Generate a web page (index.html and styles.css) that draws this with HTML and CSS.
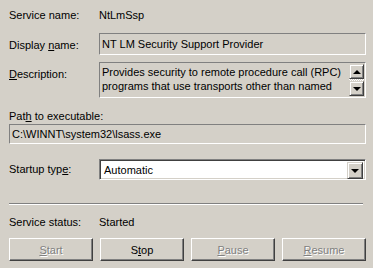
FILE: index.html
```html
<!DOCTYPE html>
<html lang="en">
<head>
  <meta charset="UTF-8" />
  <title>NtLmSsp Properties</title>
  <link rel="stylesheet" href="styles.css">
</head>
<body>
  <div class="page">
    <div class="row row-name">
      <div class="label">Service name:</div>
      <div class="value">NtLmSsp</div>
    </div>

    <div class="row row-display">
      <div class="label lbl-display">Display <u>n</u>ame:</div>
      <div class="field field-display">NT LM Security Support Provider</div>
    </div>

    <div class="row row-desc">
      <div class="label lbl-desc"><u>D</u>escription:</div>
      <div class="field field-desc">
        <div class="desc-text">Provides security to remote procedure call (RPC) programs that use transports other than named</div>
        <div class="scroll">
          <div class="sbtn"><span class="arrow-up"></span></div>
          <div class="track"></div>
          <div class="sbtn"><span class="arrow-down"></span></div>
        </div>
      </div>
    </div>

    <div class="path-label">Pat<u>h</u> to executable:</div>
    <div class="field field-path">C:\WINNT\system32\lsass.exe</div>

    <div class="row row-startup">
      <div class="label lbl-startup">Startup typ<u>e</u>:</div>
      <div class="combo">
        <div class="combo-text">Automatic</div>
        <div class="combo-btn"><span class="arrow-down"></span></div>
      </div>
    </div>

    <div class="sep"></div>

    <div class="row row-status">
      <div class="label">Service status:</div>
      <div class="value">Started</div>
    </div>

    <div class="buttons">
      <button class="btn" disabled><u>S</u>tart</button>
      <button class="btn">S<u>t</u>op</button>
      <button class="btn" disabled><u>P</u>ause</button>
      <button class="btn" disabled><u>R</u>esume</button>
    </div>
  </div>
</body>
</html>
```

FILE: styles.css
```css
body {
  margin: 0;
  background-color: #d4d0c8;
  font-family: 'Liberation Sans', Arial, sans-serif;
  font-size: 11px;
  line-height: 13px;
  color: #000;
}
u { text-decoration: underline; text-underline-offset: 1px; }
.page {
  width: 357px;
  padding: 9px 0 0 9px;
}
.row { display: flex; align-items: flex-start; }
.label { width: 90px; flex-shrink: 0; }
.value { flex: 1; }

.field {
  box-sizing: border-box;
  border: 1px solid;
  border-color: #808080 #ffffff #ffffff #808080;
  padding: 3px 2px 0 2px;
  white-space: nowrap;
}
.row-display { margin-top: 11px; }
.lbl-display { padding-top: 6px; }
.field-display { width: 267px; height: 22px; padding-top: 4px; }

.row-desc { margin-top: 7px; }
.lbl-desc { padding-top: 6px; }
.field-desc {
  width: 267px;
  height: 36px;
  display: flex;
  padding: 1px 1px 1px 2px;
}
.desc-text {
  flex: 1;
  white-space: normal;
  padding-top: 1px;
  line-height: 14px;
  overflow: hidden;
}
.scroll {
  width: 15px;
  display: flex;
  flex-direction: column;
}
.track {
  flex: 1;
  background-color: #ffffff;
  background-image: repeating-conic-gradient(#d4d0c8 0 25%, #ffffff 0 50%);
  background-size: 2px 2px;
}
.sbtn, .combo-btn {
  box-sizing: border-box;
  height: 15px;
  background: #d4d0c8;
  border: 1px solid;
  border-color: #d4d0c8 #404040 #404040 #d4d0c8;
  box-shadow: inset 1px 1px 0 #ffffff, inset -1px -1px 0 #808080;
  display: flex;
  align-items: center;
  justify-content: center;
}
.arrow-up, .arrow-down {
  width: 0;
  height: 0;
  border-left: 4px solid transparent;
  border-right: 4px solid transparent;
}
.arrow-up { border-bottom: 4px solid #000; }
.arrow-down { border-top: 4px solid #000; }

.path-label { margin-top: 12px; }
.field-path { margin-top: 1px; width: 357px; height: 20px; padding-top: 3px; }

.row-startup { margin-top: 15px; }
.lbl-startup { padding-top: 4px; }
.combo {
  box-sizing: border-box;
  width: 267px;
  height: 21px;
  display: flex;
  background: #ffffff;
  border: 1px solid;
  border-color: #808080 #ffffff #ffffff #808080;
  box-shadow: inset 1px 1px 0 #404040, inset -1px -1px 0 #d4d0c8;
  padding: 2px;
}
.combo-text { flex: 1; padding: 2px 0 0 2px; }
.combo-btn { width: 16px; height: 17px; }

.sep {
  margin-top: 23px;
  width: 354px;
  height: 0;
  border-top: 1px solid #808080;
  border-bottom: 1px solid #ffffff;
}

.row-status { margin-top: 11px; }

.buttons {
  margin-top: 9px;
  display: flex;
  gap: 7px;
}
.btn {
  box-sizing: border-box;
  width: 84px;
  height: 23px;
  font-family: inherit;
  font-size: 11px;
  color: #000;
  background: #d4d0c8;
  border: 1px solid;
  border-color: #ffffff #404040 #404040 #ffffff;
  box-shadow: inset -1px -1px 0 #808080;
  padding: 0;
}
.btn:disabled {
  color: #808080;
  text-shadow: 1px 1px 0 #ffffff;
}
```
